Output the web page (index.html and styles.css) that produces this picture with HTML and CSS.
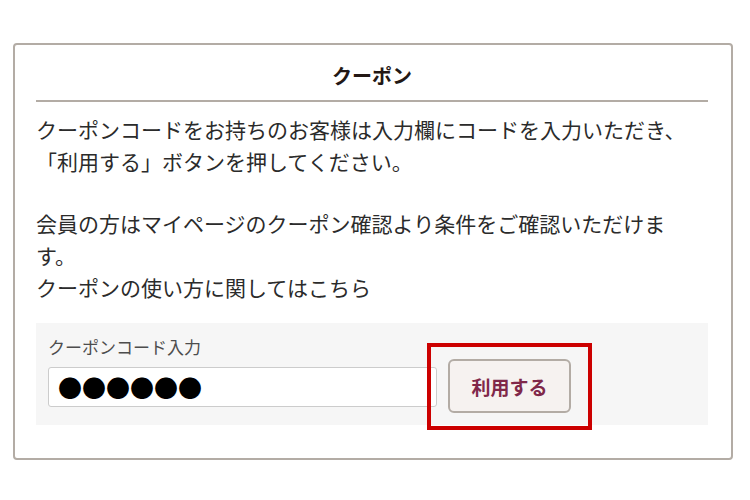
FILE: index.html
```html
<!DOCTYPE html>
<html lang="ja">
<head>
    <meta charset="UTF-8">
    <meta name="viewport" content="width=device-width, initial-scale=1.0">
    <title>クーポン</title>
    <link rel="stylesheet" href="styles.css">
</head>
<body>
    <div class="coupon-box">
        <h2 class="coupon-title">クーポン</h2>
        <div class="coupon-text">
            <p>クーポンコードをお持ちのお客様は入力欄にコードを入力いただき、「利用する」ボタンを押してください。</p>
            <p>会員の方はマイページのクーポン確認より条件をご確認いただけます。<br>クーポンの使い方に関してはこちら</p>
        </div>
        <form class="coupon-form" onsubmit="return false;">
            <label class="coupon-label" for="coupon-code">クーポンコード入力</label>
            <input class="coupon-input" id="coupon-code" type="text" value="●●●●●●">
            <div class="btn-wrap">
                <button class="coupon-btn" type="submit">利用する</button>
            </div>
        </form>
    </div>
</body>
</html>
```

FILE: styles.css
```css
body {
    margin: 0;
    font-family: "Noto Sans CJK JP", "Noto Sans", sans-serif;
    background-color: #ffffff;
    color: #2b2b2b;
}
.coupon-box {
    box-sizing: border-box;
    width: 720px;
    height: 417px;
    margin: 43px 0 0 13px;
    padding: 16px 23px 0 21px;
    border: 2px solid #b3aca5;
    border-radius: 4px;
}
.coupon-title {
    margin: 0;
    padding-bottom: 9px;
    border-bottom: 2px solid #b3aca5;
    font-size: 20px;
    line-height: 30px;
    font-weight: bold;
    text-align: center;
    color: #231815;
}
.coupon-text {
    width: 660px;
    margin-top: 11px;
    font-size: 21px;
    line-height: 32px;
}
.coupon-text p {
    margin: 0 0 30px;
}
.coupon-text p:last-child {
    margin-bottom: 0;
}
.coupon-form {
    display: grid;
    grid-template-columns: 389px 123px;
    grid-template-rows: 24px 54px;
    column-gap: 11px;
    margin: 20px 0 0;
    padding: 12px;
    background-color: #f6f6f6;
}
.coupon-label {
    grid-column: 1;
    grid-row: 1;
    font-size: 17px;
    line-height: 24px;
    color: #4d4d4d;
}
.coupon-input {
    grid-column: 1;
    grid-row: 2;
    align-self: center;
    box-sizing: border-box;
    width: 389px;
    height: 40px;
    margin: 1px 0 0;
    padding: 0 9px;
    border: 1px solid #cccccc;
    border-radius: 3px;
    background: #ffffff;
    font-family: "Noto Sans CJK JP", sans-serif;
    font-size: 24px;
    color: #000000;
    outline: none;
}
.btn-wrap {
    grid-column: 2;
    grid-row: 2;
    position: relative;
}
/* 赤枠の強調 */
.btn-wrap::after {
    content: "";
    position: absolute;
    top: -16px;
    right: -21px;
    bottom: -17px;
    left: -21px;
    border: 4px solid #cc0000;
    pointer-events: none;
}
.coupon-btn {
    box-sizing: border-box;
    width: 123px;
    height: 54px;
    border: 2px solid #b3aca5;
    border-radius: 6px;
    background-color: #f6f2f0;
    font-family: "Noto Sans CJK JP", sans-serif;
    font-size: 19px;
    font-weight: bold;
    color: #80284a;
    cursor: pointer;
}
```
